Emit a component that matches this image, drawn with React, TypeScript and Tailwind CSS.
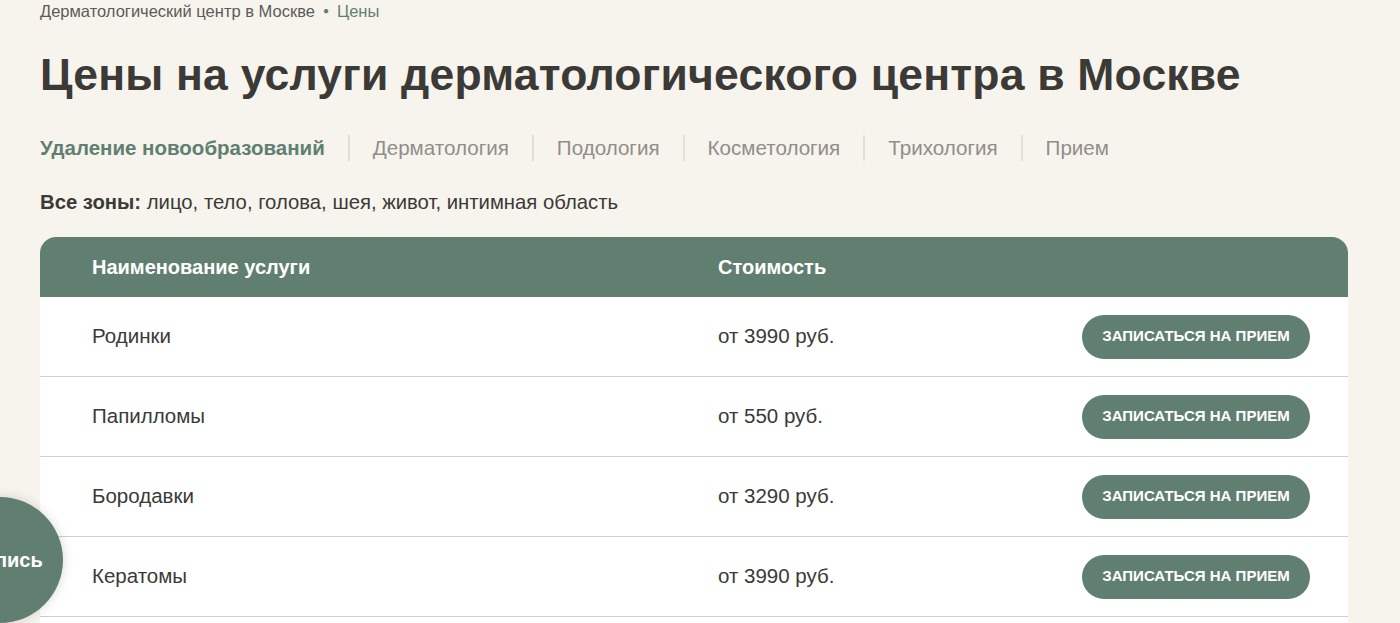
import React from "react";

interface Service {
    name: string;
    price: string;
}

const services: Service[] = [
    { name: "Родинки", price: "от 3990 руб." },
    { name: "Папилломы", price: "от 550 руб." },
    { name: "Бородавки", price: "от 3290 руб." },
    { name: "Кератомы", price: "от 3990 руб." },
];

const tabs = ["Удаление новообразований", "Дерматология", "Подология", "Косметология", "Трихология", "Прием"];

const App = () => {
    return (
        <div className="relative h-[623px] overflow-hidden bg-[#f7f4ee] font-['Liberation_Sans',Arial,sans-serif] text-[#3a3a37]">
            <div className="px-10">
                {/* breadcrumbs */}
                <div className="flex items-center gap-2 pt-[1px] text-[16.5px] leading-[20px] text-[#5b5b58]">
                    <span>Дерматологический центр в Москве</span>
                    <span className="text-[10px] text-[#617f71]">●</span>
                    <span className="text-[#617f71]">Цены</span>
                </div>

                <h1 className="mt-[26px] text-[44.5px] leading-[56px] font-semibold tracking-[0.2px] text-[#3b3a36]">
                    Цены на услуги дерматологического центра в Москве
                </h1>

                {/* tabs */}
                <div className="mt-[32px] flex items-center">
                    {tabs.map((tab, i) => (
                        <div
                            key={tab}
                            className={
                                i === 0
                                    ? "pr-[23px] text-[20.5px] leading-[26px] font-semibold text-[#617f71]"
                                    : "border-l-2 border-[#e3e0da] px-[23px] text-[20.6px] leading-[26px] text-[#8f8e8a]"
                            }
                        >
                            {tab}
                        </div>
                    ))}
                </div>

                <p className="mt-[29px] text-[20.3px] leading-[24px] text-[#3a3a37]">
                    <span className="font-bold">Все зоны:</span> лицо, тело, голова, шея, живот, интимная область
                </p>

                {/* table */}
                <div className="mt-[23px] w-[1308px] overflow-hidden rounded-t-[16px] bg-white">
                    <div className="flex h-[60px] items-center bg-[#617f71] pl-[52px] text-[20px] font-semibold text-white">
                        <div className="w-[626px]">Наименование услуги</div>
                        <div>Стоимость</div>
                    </div>
                    {services.map((s) => (
                        <div key={s.name} className="flex h-[80px] items-center border-b border-[#cfcfcf] pl-[52px] pr-[38px] text-[#3a3a37]">
                            <div className="w-[626px] text-[20.5px]">{s.name}</div>
                            <div className="flex-1 text-[20.5px]">{s.price}</div>
                            <button className="h-[44px] w-[228px] rounded-full bg-[#617f71] text-[15px] font-semibold uppercase text-white">
                                Записаться на прием
                            </button>
                        </div>
                    ))}
                    <div className="h-[20px]" />
                </div>
            </div>

            {/* floating sign-up button */}
            <div className="absolute left-[-63px] top-[497px] flex h-[126px] w-[126px] items-center justify-center rounded-full bg-[#617f71] pl-[14px] text-[20px] font-bold text-white shadow-[0_0_12px_rgba(0,0,0,0.15)]">
                Запись
            </div>
        </div>
    );
};

export default App;
